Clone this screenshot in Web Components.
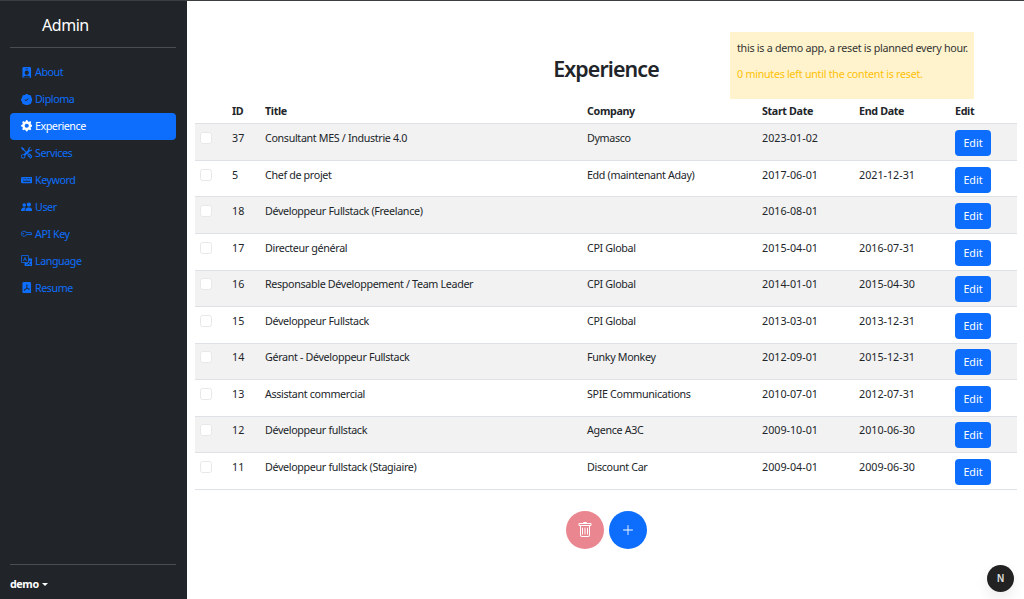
<!DOCTYPE html>
<html lang="en">
<head>
<meta charset="utf-8">
<title>Admin</title>
<style>
  html, body { margin: 0; height: 100%; overflow: hidden; background: #fff; }
  body { font-family: "Noto Sans", "Open Sans", sans-serif; font-size: 10.72px; color: #212529; }
</style>
</head>
<body>
<admin-app></admin-app>
<script>
const ICONS = {
  about: '<path d="M2 2a2 2 0 0 1 2-2h8a2 2 0 0 1 2 2v12a2 2 0 0 1-2 2H4a2 2 0 0 1-2-2V2zm4.5 0a.5.5 0 0 0 0 1h3a.5.5 0 0 0 0-1h-3zM8 11a3 3 0 1 0 0-6 3 3 0 0 0 0 6zm5 2.755C12.146 12.825 10.623 12 8 12s-4.146.826-5 1.755V14a1 1 0 0 0 1 1h8a1 1 0 0 0 1-1v-.245z"/>',
  diploma: '<path d="M10.067.87a2.89 2.89 0 0 0-4.134 0l-.622.638-.89-.011a2.89 2.89 0 0 0-2.924 2.924l.01.89-.636.622a2.89 2.89 0 0 0 0 4.134l.637.622-.011.89a2.89 2.89 0 0 0 2.924 2.924l.89-.01.622.636a2.89 2.89 0 0 0 4.134 0l.622-.637.89.011a2.89 2.89 0 0 0 2.924-2.924l-.01-.89.636-.622a2.89 2.89 0 0 0 0-4.134l-.637-.622.011-.89a2.89 2.89 0 0 0-2.924-2.924l-.89.01-.622-.636zm.287 5.984-3 3a.5.5 0 0 1-.708 0l-1.5-1.5a.5.5 0 1 1 .708-.708L7 8.793l2.646-2.647a.5.5 0 0 1 .708.708z"/>',
  gear: '<path d="M9.405 1.05c-.413-1.4-2.397-1.4-2.81 0l-.1.34a1.464 1.464 0 0 1-2.105.872l-.31-.17c-1.283-.698-2.686.705-1.987 1.987l.169.311c.446.82.023 1.841-.872 2.105l-.34.1c-1.4.413-1.4 2.397 0 2.81l.34.1a1.464 1.464 0 0 1 .872 2.105l-.17.31c-.698 1.283.705 2.686 1.987 1.987l.311-.169a1.464 1.464 0 0 1 2.105.872l.1.34c.413 1.4 2.397 1.4 2.81 0l.1-.34a1.464 1.464 0 0 1 2.105-.872l.31.17c1.283.698 2.686-.705 1.987-1.987l-.169-.311a1.464 1.464 0 0 1 .872-2.105l.34-.1c1.4-.413 1.4-2.397 0-2.81l-.34-.1a1.464 1.464 0 0 1-.872-2.105l.17-.31c.698-1.283-.705-2.686-1.987-1.987l-.311.169a1.464 1.464 0 0 1-2.105-.872l-.1-.34zM8 10.93a2.929 2.929 0 1 1 0-5.86 2.929 2.929 0 0 1 0 5.858z"/>',
  tools: '<path d="M1 0 0 1l2.2 3.081a1 1 0 0 0 .815.419h.07a1 1 0 0 1 .708.293l2.675 2.675-2.617 2.654A3.003 3.003 0 0 0 0 13a3 3 0 1 0 5.878-.851l2.654-2.617.968.968-.305.914a1 1 0 0 0 .242 1.023l3.27 3.27a.997.997 0 0 0 1.414 0l1.586-1.586a.997.997 0 0 0 0-1.414l-3.27-3.27a1 1 0 0 0-1.023-.242L10.5 9.5l-.96-.96 2.68-2.643A3.005 3.005 0 0 0 16 3c0-.269-.035-.53-.102-.777l-2.14 2.141L12 4l-.364-1.757L13.777.102a3 3 0 0 0-3.675 3.68L7.462 6.46 4.793 3.793a1 1 0 0 1-.293-.707v-.071a1 1 0 0 0-.419-.814L1 0Zm9.646 10.646a.5.5 0 0 1 .708 0l2.914 2.915a.5.5 0 0 1-.707.707l-2.915-2.914a.5.5 0 0 1 0-.708ZM3 11l.471.242.529.026.287.445.445.287.026.529L5 13l-.242.471-.026.529-.445.287-.287.445-.529.026L3 15l-.471-.242L2 14.732l-.287-.445L1.268 14l-.026-.529L1 13l.242-.471.026-.529.445-.287.287-.445.529-.026L3 11Z"/>',
  keyboard: '<path fill-rule="evenodd" d="M0 6a2 2 0 0 1 2-2h12a2 2 0 0 1 2 2v5a2 2 0 0 1-2 2H2a2 2 0 0 1-2-2V6zm3 4.5v.5h10v-.5a.3.3 0 0 0-.3-.3H3.3a.3.3 0 0 0-.3.3zM2 6v1h1V6H2zm2 0v1h1V6H4zm2 0v1h1V6H6zm2 0v1h1V6H8zm2 0v1h1V6h-1zm2 0v1h2V6h-2zM3 8v1h1V8H3zm2 0v1h1V8H5zm2 0v1h1V8H7zm2 0v1h1V8H9zm2 0v1h1V8h-1z"/>',
  people: '<path d="M7 14s-1 0-1-1 1-4 5-4 5 3 5 4-1 1-1 1H7zm4-6a3 3 0 1 0 0-6 3 3 0 0 0 0 6zm-5.784 6A2.238 2.238 0 0 1 5 13c0-1.355.68-2.75 1.936-3.72A6.325 6.325 0 0 0 5 9c-4 0-5 3-5 4s1 1 1 1h4.216zM4.5 8a2.5 2.5 0 1 0 0-5 2.5 2.5 0 0 0 0 5z"/>',
  key: '<path d="M0 8a4 4 0 0 1 7.465-2H14a.5.5 0 0 1 .354.146l1.5 1.5a.5.5 0 0 1 0 .708l-1.5 1.5a.5.5 0 0 1-.708 0L13 9.207l-.646.647a.5.5 0 0 1-.708 0L11 9.207l-.646.647a.5.5 0 0 1-.708 0L9 9.207l-.646.647A.5.5 0 0 1 8 10h-.535A4 4 0 0 1 0 8zm4-3a3 3 0 1 0 2.712 4.285A.5.5 0 0 1 7.163 9h.63l.853-.854a.5.5 0 0 1 .708 0l.646.647.646-.647a.5.5 0 0 1 .708 0l.646.647.646-.647a.5.5 0 0 1 .708 0l.646.647.793-.793-1-1H7.163a.5.5 0 0 1-.451-.285A3 3 0 0 0 4 5z"/><path d="M4 8a1 1 0 1 1-2 0 1 1 0 0 1 2 0z"/>',
  translate: '<path d="M4.545 6.714 4.11 8H3l1.862-5h1.284L8 8H6.833l-.435-1.286H4.545zm1.634-.736L5.5 3.956h-.049l-.679 2.022H6.18z"/><path d="M0 2a2 2 0 0 1 2-2h7a2 2 0 0 1 2 2v3h3a2 2 0 0 1 2 2v7a2 2 0 0 1-2 2H7a2 2 0 0 1-2-2v-3H2a2 2 0 0 1-2-2V2zm2-1a1 1 0 0 0-1 1v7a1 1 0 0 0 1 1h7a1 1 0 0 0 1-1V2a1 1 0 0 0-1-1H2zm7.138 9.995c.193.301.402.583.63.846-.748.575-1.673 1.001-2.768 1.292.178.217.451.635.555.867 1.125-.359 2.08-.844 2.886-1.494.777.665 1.739 1.165 2.93 1.472.133-.254.414-.673.629-.89-1.125-.253-2.057-.694-2.82-1.284.681-.747 1.222-1.651 1.621-2.757H14V8h-3v1.047h.765c-.318.844-.74 1.546-1.272 2.13a6.066 6.066 0 0 1-.415-.492 1.988 1.988 0 0 1-.94.31z"/>',
  pdf: '<path d="M5.523 10.424c.14-.082.293-.162.459-.238a7.878 7.878 0 0 1-.45.606c-.28.337-.498.516-.635.572a.266.266 0 0 1-.035.012.282.282 0 0 1-.026-.044c-.056-.11-.054-.216.04-.36.106-.165.319-.354.647-.548zm2.455-1.647c-.119.025-.237.05-.356.078a21.035 21.035 0 0 0 .5-1.05 11.96 11.96 0 0 0 .51.858c-.217.032-.436.07-.654.114zm2.525.939a3.888 3.888 0 0 1-.435-.41c.228.005.434.022.612.054.317.057.466.147.518.209a.095.095 0 0 1 .026.064.436.436 0 0 1-.06.2.307.307 0 0 1-.094.124.107.107 0 0 1-.069.015c-.09-.003-.258-.066-.498-.256zM8.278 4.97c-.04.244-.108.524-.2.829a4.86 4.86 0 0 1-.089-.346c-.076-.353-.087-.63-.046-.822.038-.177.11-.248.196-.283a.517.517 0 0 1 .145-.04c.013.03.028.092.032.198.005.122-.007.277-.038.465z"/><path fill-rule="evenodd" d="M4 0h8a2 2 0 0 1 2 2v12a2 2 0 0 1-2 2H4a2 2 0 0 1-2-2V2a2 2 0 0 1 2-2zm.165 11.668c.09.18.23.343.438.419.207.075.412.04.58-.03.318-.13.635-.436.926-.786.333-.401.683-.927 1.021-1.51a11.64 11.64 0 0 1 1.997-.406c.3.383.61.713.91.95.28.22.603.403.934.417a.856.856 0 0 0 .51-.138c.155-.101.27-.247.354-.416.09-.181.145-.37.138-.563a.844.844 0 0 0-.2-.518c-.226-.27-.596-.4-.96-.465a5.76 5.76 0 0 0-1.335-.05 10.954 10.954 0 0 1-.98-1.686c.25-.66.437-1.284.52-1.794.036-.218.055-.426.048-.614a1.238 1.238 0 0 0-.127-.538.7.7 0 0 0-.477-.365c-.202-.043-.41 0-.601.077-.377.15-.576.47-.651.823-.073.34-.04.736.046 1.136.088.406.238.848.43 1.295a19.707 19.707 0 0 1-1.062 2.227 7.662 7.662 0 0 0-1.482.645c-.37.22-.699.48-.897.787-.21.326-.275.714-.08 1.103z"/>',
  trash: '<path d="M5.5 5.5A.5.5 0 0 1 6 6v6a.5.5 0 0 1-1 0V6a.5.5 0 0 1 .5-.5zm2.5 0a.5.5 0 0 1 .5.5v6a.5.5 0 0 1-1 0V6a.5.5 0 0 1 .5-.5zm3 .5a.5.5 0 0 0-1 0v6a.5.5 0 0 0 1 0V6z"/><path fill-rule="evenodd" d="M14.5 3a1 1 0 0 1-1 1H13v9a2 2 0 0 1-2 2H5a2 2 0 0 1-2-2V4h-.5a1 1 0 0 1-1-1V2a1 1 0 0 1 1-1H6a1 1 0 0 1 1-1h2a1 1 0 0 1 1 1h3.5a1 1 0 0 1 1 1v1zM4.118 4 4 4.059V13a1 1 0 0 0 1 1h6a1 1 0 0 0 1-1V4.059L11.882 4H4.118zM2.5 3V2h11v1h-11z"/>',
  plus: '<path d="M8 2.2a.5.5 0 0 1 .5.5v4.8h4.8a.5.5 0 0 1 0 1H8.5v4.8a.5.5 0 0 1-1 0V8.5H2.7a.5.5 0 0 1 0-1h4.8V2.7a.5.5 0 0 1 .5-.5z"/>'
};

function icon(name, size) {
  return `<svg xmlns="http://www.w3.org/2000/svg" width="${size}" height="${size}" viewBox="0 0 16 16" fill="currentColor">${ICONS[name]}</svg>`;
}

class NavItem extends HTMLElement {
  constructor() {
    super();
    this.attachShadow({ mode: 'open' });
    const active = this.hasAttribute('active');
    this.shadowRoot.innerHTML = `
      <style>
        :host { display: block; letter-spacing: -0.45px; }
        a {
          display: flex;
          align-items: center;
          gap: 3px;
          height: 26.9px;
          padding: 0 10.5px;
          border-radius: 4px;
          text-decoration: none;
          color: ${active ? '#fff' : '#0d6efd'};
          background: ${active ? '#0d6efd' : 'transparent'};
        }
        svg { flex: none; }
      </style>
      <a href="#">${icon(this.getAttribute('icon'), 11.5)}<slot></slot></a>
    `;
  }
}
customElements.define('nav-item', NavItem);

class SideBar extends HTMLElement {
  constructor() {
    super();
    this.attachShadow({ mode: 'open' });
    this.shadowRoot.innerHTML = `
      <style>
        :host {
          display: flex;
          flex-direction: column;
          flex: none;
          box-sizing: border-box;
          width: 187px;
          padding: 10.5px 11px 0 10px;
          background: #212529;
          color: #fff;
        }
        .brand { font-size: 16px; line-height: 26px; padding-left: 32px; height: 26px; letter-spacing: -0.45px; }
        hr { width: 100%; margin: 9.5px 0 11px; border: 0; border-top: 1px solid #4a4d51; }
        nav { display: flex; flex-direction: column; flex: 1; }
        .user { display: flex; align-items: center; gap: 3px; font-weight: 700; height: 24px; padding-bottom: 3px; letter-spacing: -0.4px; }
        .caret { border: 3px solid transparent; border-top-color: #fff; border-bottom: 0; }
        hr.end { margin: 0 0 7px; }
      </style>
      <div class="brand">Admin</div>
      <hr>
      <nav><slot></slot></nav>
      <hr class="end">
      <div class="user">demo<span class="caret"></span></div>
    `;
  }
}
customElements.define('side-bar', SideBar);

class ExpRow extends HTMLElement {
  constructor() {
    super();
    this.attachShadow({ mode: 'open' });
    const v = n => this.getAttribute(n) || '';
    this.shadowRoot.innerHTML = `
      <style>
        :host {
          display: grid;
          grid-template-columns: var(--cols);
          box-sizing: border-box;
          height: 36.55px;
          padding-top: 5.7px;
          border-bottom: 1px solid #dee2e6;
          background: ${this.hasAttribute('odd') ? '#f2f2f2' : '#fff'};
        }
        div { padding: 0 5px; line-height: 16px; white-space: nowrap; }
        .txt { letter-spacing: -0.34px; }
        .box { width: 10px; height: 10px; margin: 2px 0 0 5px; padding: 0; border: 1px solid #e6e8ea; border-radius: 2.6px; background: #fff; }
        button {
          display: block;
          width: 36px;
          height: 26px;
          margin: 0;
          padding: 0;
          border: 0;
          border-radius: 4px;
          background: #0d6efd;
          color: #fff;
          font: inherit;
        }
      </style>
      <span class="box"></span>
      <div>${v('rid')}</div><div class="txt">${v('name')}</div><div class="txt">${v('company')}</div>
      <div>${v('start')}</div><div>${v('end')}</div>
      <div><button>Edit</button></div>
    `;
  }
}
customElements.define('exp-row', ExpRow);

class ExpHead extends HTMLElement {
  constructor() {
    super();
    this.attachShadow({ mode: 'open' });
    this.shadowRoot.innerHTML = `
      <style>
        :host {
          display: grid;
          grid-template-columns: var(--cols);
          height: 24.4px;
          padding-bottom: 2px;
          align-items: center;
          font-weight: 700;
          color: #212529;
          border-bottom: 1px solid #dee2e6;
          box-sizing: border-box;
          letter-spacing: -0.35px;
        }
        div { padding: 0 5px; }
      </style>
      <span></span><div>ID</div><div>Title</div><div>Company</div>
      <div>Start Date</div><div>End Date</div><div>Edit</div>
    `;
  }
}
customElements.define('exp-head', ExpHead);

class DemoNotice extends HTMLElement {
  constructor() {
    super();
    this.attachShadow({ mode: 'open' });
    this.shadowRoot.innerHTML = `
      <style>
        :host {
          position: absolute;
          top: 31px;
          left: 730px;
          box-sizing: border-box;
          width: 244px;
          height: 67px;
          padding: 7.5px 7px;
          background: #fff3cd;
          color: #333;
          letter-spacing: -0.27px;
        }
        p { margin: 0 0 10.5px; line-height: 16px; white-space: nowrap; }
        .warn { color: #ffc107; }
      </style>
      <p>this is a demo app, a reset is planned every hour.</p>
      <p class="warn">0 minutes left until the content is reset.</p>
    `;
  }
}
customElements.define('demo-notice', DemoNotice);

class RoundBtn extends HTMLElement {
  constructor() {
    super();
    this.attachShadow({ mode: 'open' });
    const red = this.hasAttribute('danger');
    this.shadowRoot.innerHTML = `
      <style>
        :host {
          display: flex;
          align-items: center;
          justify-content: center;
          width: 38px;
          height: 38px;
          border-radius: 50%;
          color: #fff;
          background: ${red ? '#ea868f' : '#0d6efd'};
        }
      </style>
      ${icon(this.getAttribute('icon'), red ? 16 : 14)}
    `;
  }
}
customElements.define('round-btn', RoundBtn);

class NextBadge extends HTMLElement {
  constructor() {
    super();
    this.attachShadow({ mode: 'open' });
    this.shadowRoot.innerHTML = `
      <style>
        :host {
          position: absolute;
          right: 10px;
          bottom: 7px;
          display: flex;
          align-items: center;
          justify-content: center;
          width: 27px;
          height: 27px;
          border-radius: 50%;
          background: #222;
          color: #ddd;
          font: 700 10px "Liberation Sans", sans-serif;
          box-shadow: 0 6px 14px rgba(0,0,0,.08);
        }
      </style>
      N
    `;
  }
}
customElements.define('next-badge', NextBadge);

class AdminApp extends HTMLElement {
  constructor() {
    super();
    this.attachShadow({ mode: 'open' });
    const rows = [
      ['37', 'Consultant MES / Industrie 4.0', 'Dymasco', '2023-01-02', ''],
      ['5', 'Chef de projet', 'Edd (maintenant Aday)', '2017-06-01', '2021-12-31'],
      ['18', 'Développeur Fullstack (Freelance)', '', '2016-08-01', ''],
      ['17', 'Directeur général', 'CPI Global', '2015-04-01', '2016-07-31'],
      ['16', 'Responsable Développement / Team Leader', 'CPI Global', '2014-01-01', '2015-04-30'],
      ['15', 'Développeur Fullstack', 'CPI Global', '2013-03-01', '2013-12-31'],
      ['14', 'Gérant - Développeur Fullstack', 'Funky Monkey', '2012-09-01', '2015-12-31'],
      ['13', 'Assistant commercial', 'SPIE Communications', '2010-07-01', '2012-07-31'],
      ['12', 'Développeur fullstack', 'Agence A3C', '2009-10-01', '2010-06-30'],
      ['11', 'Développeur fullstack (Stagiaire)', 'Discount Car', '2009-04-01', '2009-06-30']
    ];
    const nav = [
      ['about', 'About'], ['diploma', 'Diploma'], ['gear', 'Experience'], ['tools', 'Services'],
      ['keyboard', 'Keyword'], ['people', 'User'], ['key', 'API Key'], ['translate', 'Language'], ['pdf', 'Resume']
    ];
    this.shadowRoot.innerHTML = `
      <style>
        :host {
          display: flex;
          position: relative;
          box-sizing: border-box;
          height: 100vh;
          overflow: hidden;
          border-top: 1px solid #3c3f42;
          --cols: 32px 33px 322px 175px 97px 96px 1fr;
        }
        main { flex: 1; min-width: 0; padding: 0 7px 0 8px; }
        h2 {
          margin: 0;
          height: 99px;
          box-sizing: border-box;
          padding-top: 54px;
          text-align: center;
          font-size: 21.4px;
          line-height: 28px;
          font-weight: 600;
          letter-spacing: -0.9px;
        }
        .actions { display: flex; justify-content: center; gap: 5px; margin-top: 21px; }
      </style>
      <side-bar>
        ${nav.map(n => `<nav-item icon="${n[0]}"${n[1] === 'Experience' ? ' active' : ''}>${n[1]}</nav-item>`).join('')}
      </side-bar>
      <main>
        <h2>Experience</h2>
        <exp-head></exp-head>
        ${rows.map((r, i) => `<exp-row${i % 2 ? '' : ' odd'} rid="${r[0]}" name="${r[1]}" company="${r[2]}" start="${r[3]}" end="${r[4]}"></exp-row>`).join('')}
        <div class="actions">
          <round-btn danger icon="trash"></round-btn>
          <round-btn icon="plus"></round-btn>
        </div>
      </main>
      <demo-notice></demo-notice>
      <next-badge></next-badge>
    `;
  }
}
customElements.define('admin-app', AdminApp);
</script>
</body>
</html>
